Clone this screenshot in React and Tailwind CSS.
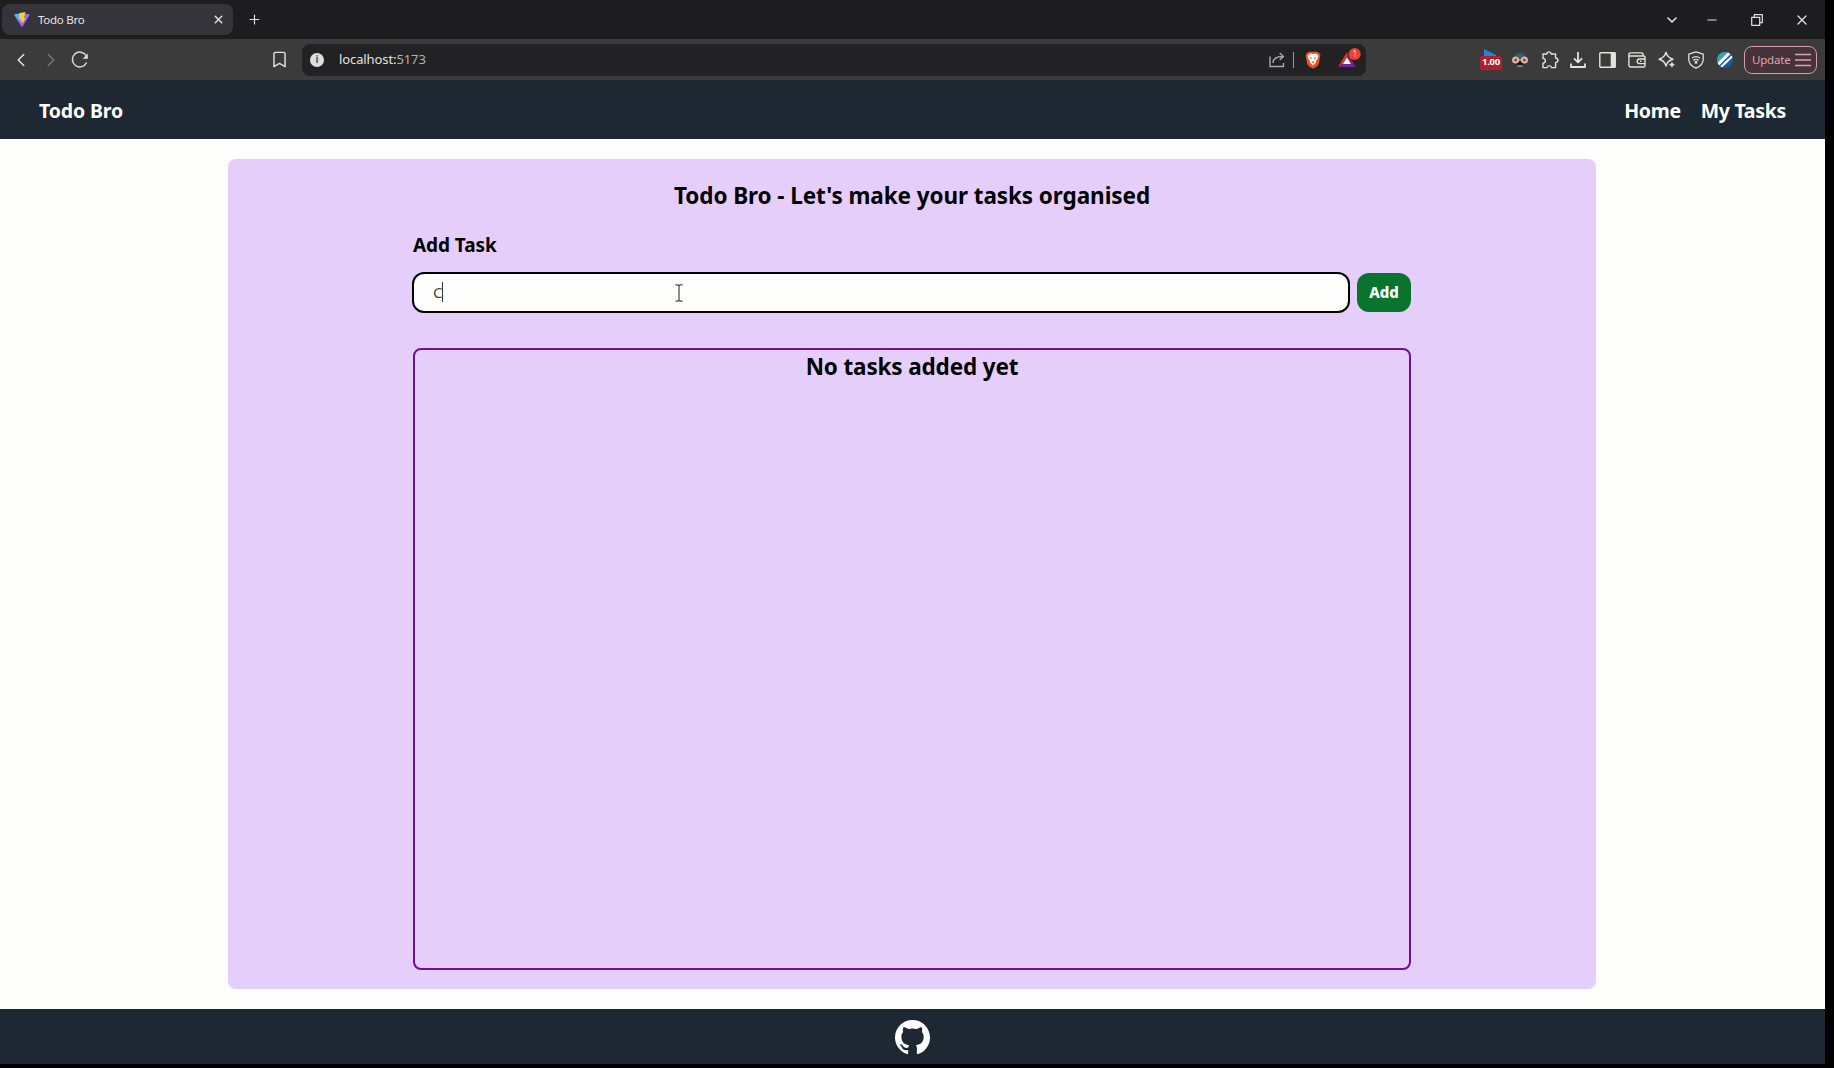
import { ChevronDown, Minus, X, Plus, ChevronLeft, ChevronRight, Bookmark } from "lucide-react";

const ViteLogo = () => (
  <svg width="16" height="16" viewBox="0 0 16 16">
    <defs>
      <linearGradient id="v" x1="0" y1="0" x2="0.8" y2="0.8">
        <stop offset="0" stopColor="#41d1ff" />
        <stop offset="1" stopColor="#bd34fe" />
      </linearGradient>
    </defs>
    <path d="M0 2.5 7.4 1.2 16 2.5 8 15.5z" fill="url(#v)" />
    <path d="M11.5 0 5.5 1 5 7.4 7 7 6.6 10 8.4 9.4 7.8 12.5 11.8 6 9.8 6.3z" fill="#ffcd2e" />
  </svg>
);

const Reload = () => (
  <svg width="18" height="18" viewBox="0 0 18 18" fill="none" stroke="#dededc" strokeWidth="1.5">
    <path d="M15.2 4.7A7.4 7.4 0 1 0 15.6 11.5" />
    <path d="M16.8 2.6v5.2h-5z" fill="#dededc" stroke="none" />
  </svg>
);

const Share = () => (
  <svg width="16" height="16" viewBox="0 0 16 16" fill="none" stroke="#a9a9a9" strokeWidth="1.4">
    <path d="M1 4.5V14.5H14.5V11" />
    <path d="M4 11C4 6.5 7 4.5 14 4.5M10.7 1 14.4 4.5 10.7 8" />
  </svg>
);

const Brave = () => (
  <svg width="16" height="18" viewBox="0 0 16 18">
    <path d="M4 .8 2 2 .6 3.5 1 6 2.2 13 4 15.2 8 17.8 12 15.2 13.8 13 15 6 15.4 3.5 14 2 12 .8z" fill="#f0501f" />
    <path d="M8 3 5 2.6 2.6 4.8 3 7 5 10 5 11.6 8 14.6 11 11.6 11 10 13 7 13.4 4.8 11 2.6z" fill="#fff" />
    <path d="M4.2 6.2 7 6.8 6.4 8.2zM11.8 6.2 9 6.8 9.6 8.2zM6.3 11 8 10.2 9.7 11 8 12.3z" fill="#f0501f" />
  </svg>
);

const Triangle = () => (
  <svg width="23" height="20" viewBox="0 0 23 20">
    <path d="M9 4 0 19 9 13z" fill="#e0352b" />
    <path d="M9 4 18 19 9 13z" fill="#8a1e66" />
    <path d="M0 19H18L9 13z" fill="#662d91" />
    <path d="M9 9.5 5 16H13z" fill="#fff" />
    <circle cx="16.7" cy="6" r="6" fill="#f0402c" />
    <text x="16.7" y="9" textAnchor="middle" fontSize="8" fontFamily="Noto Sans" fill="#ffd0c8">1</text>
  </svg>
);

const SpeedFlag = () => (
  <span className="flex h-[22px] w-[22px] flex-col">
    <svg width="22" height="7" viewBox="0 0 22 7"><path d="M4 0 16 6 16 7H4z" fill="#1e88d6" /></svg>
    <span className="flex h-[14px] items-center justify-center rounded-[2px] bg-[#b01f2a] text-[9.5px] font-bold tracking-[-0.2px] text-white">1.00</span>
  </span>
);

const Face = () => (
  <svg width="16" height="16" viewBox="0 0 16 16">
    <path d="M2.5 6Q3 1 8 1t5.5 5z" fill="#2b6568" />
    <path d="M5 10H11L12.5 12.5H3.5z" fill="#111" />
    <path d="M5.5 14.2h5" stroke="#8fa0a0" strokeWidth="1.3" />
    <circle cx="3.6" cy="8" r="2.5" fill="#5b5b5b" stroke="#eeb0a8" strokeWidth="2" />
    <circle cx="12.4" cy="8" r="2.5" fill="#5b5b5b" stroke="#eeb0a8" strokeWidth="2" />
    <path d="M6 7.6h4" stroke="#eeb0a8" strokeWidth="1.2" />
  </svg>
);

const line = { fill: "none", stroke: "#e2e2df", strokeWidth: 1.4, strokeLinejoin: "round" };

const Puzzle = () => (
  <svg width="18" height="18" viewBox="0 0 18 18" {...line}>
    <path d="M2 3H5.8C6 1.6 6.8.9 8 .9S10 1.6 10.3 3H14.6V7C16.2 7.3 17 8.2 17 9.3S16.2 11.3 14.6 11.6V16.6H10.4C10.2 15.2 9.4 14.6 8.3 14.6S6.4 15.2 6.1 16.6H2V12.2C3.6 12 4.4 11 4.4 9.8S3.6 7.6 2 7.4z" />
  </svg>
);
const Download = () => (
  <svg width="16" height="16" viewBox="0 0 16 16" {...line} strokeWidth="1.8">
    <path d="M8 0V10M4 6.3 8 10.3 12 6.3M1 11.5V15H15V11.5" />
  </svg>
);
const Panel = () => (
  <svg width="17" height="16" viewBox="0 0 17 16" {...line}>
    <rect x=".8" y=".8" width="15.4" height="14.4" rx="1" />
    <path d="M12.4 1H16V15H12.4z" fill="#e2e2df" />
  </svg>
);
const Wallet = () => (
  <svg width="18" height="16" viewBox="0 0 18 16" {...line}>
    <path d="M15 4V2.2Q15 .9 13.6.9H2.6Q.9.9.9 2.6T2.6 4H15.4Q17 4 17 5.6V13.4Q17 15 15.4 15H2.8Q.9 15 .9 13.2V2.6" />
    <path d="M17 7H11.6Q9.2 7 9.2 9.3T11.6 11.6H17M12 9.3h1.4" />
  </svg>
);
const Sparkle = () => (
  <svg width="18" height="18" viewBox="0 0 18 18" {...line}>
    <path d="M8 1.2Q9.3 6.8 15 8.2 9.3 9.6 8 15 6.6 9.6 1.1 8.2 6.6 6.8 8 1.2z" />
    <path d="M14 9.8Q14.5 13 17.6 13.8 14.5 14.5 14 17.6 13.4 14.5 10.4 13.8 13.4 13 14 9.8z" fill="#e2e2df" stroke="#3c3b3b" strokeWidth=".6" />
  </svg>
);
const Shield = () => (
  <svg width="16" height="18" viewBox="0 0 16 18" {...line} strokeWidth="1.3">
    <path d="M8 .9 15.2 3.2V8.5Q15.2 14 8 17.2.8 14 .8 8.5V3.2z" />
    <path d="M4 7.2Q8 4.2 12 7.2M5.4 9.4Q8 7.4 10.6 9.4" />
    <circle cx="8" cy="11.4" r=".8" fill="#e2e2df" />
  </svg>
);
const Profile = () => (
  <svg width="16" height="16" viewBox="0 0 16 16">
    <clipPath id="pc"><circle cx="8" cy="8" r="8" /></clipPath>
    <g clipPath="url(#pc)">
      <path d="M0 0H16V16H0z" fill="#1d58a8" />
      <path d="M0 0H14L0 13z" fill="#3fa3a5" />
      <path d="M1 12.5 12.5 1" stroke="#fff" strokeWidth="3" />
      <path d="M4 15 15.5 4" stroke="#fff" strokeWidth="2.2" />
    </g>
  </svg>
);

const GitHub = () => (
  <svg width="35" height="35" viewBox="0 0 16 16" fill="#fff">
    <path d="M8 0C3.58 0 0 3.58 0 8c0 3.54 2.29 6.53 5.47 7.59.4.07.55-.17.55-.38 0-.19-.01-.82-.01-1.49-2.01.37-2.53-.49-2.69-.94-.09-.23-.48-.94-.82-1.13-.28-.15-.68-.52-.01-.53.63-.01 1.08.58 1.23.82.72 1.21 1.87.87 2.33.66.07-.52.28-.87.51-1.07-1.78-.2-3.64-.89-3.64-3.95 0-.87.31-1.59.82-2.15-.08-.2-.36-1.02.08-2.12 0 0 .67-.21 2.2.82.64-.18 1.32-.27 2-.27s1.36.09 2 .27c1.53-1.04 2.2-.82 2.2-.82.44 1.1.16 1.92.08 2.12.51.56.82 1.27.82 2.15 0 3.07-1.87 3.75-3.65 3.95.29.25.54.73.54 1.48 0 1.07-.01 1.93-.01 2.2 0 .21.15.46.55.38A8.01 8.01 0 0 0 16 8c0-4.42-3.58-8-8-8z" />
  </svg>
);

function TabStrip() {
  return (
    <div className="flex h-[39px] items-center bg-[#1d1d20] text-[#e4e4e4]">
      <div className="ml-[2px] flex h-[31px] w-[231px] items-center rounded-lg bg-[#34343a] pl-[12px] pr-[8px]">
        <ViteLogo />
        <span className="ml-[8px] flex-1 text-[11.5px] tracking-[-0.25px]">Todo Bro</span>
        <X size={13} strokeWidth={2.6} />
      </div>
      <Plus size={15} strokeWidth={1.8} className="ml-[14px]" />
      <div className="flex-1" />
      <ChevronDown size={16} strokeWidth={2.4} className="mr-[25px]" />
      <Minus size={14} strokeWidth={2} className="mr-[32px]" />
      <svg width="12" height="12" viewBox="0 0 12 12" {...line} strokeWidth="1.2" className="mr-[31px]">
        <path d="M.7 3.3H8.7V11.3H.7zM3.3 3.3V.7H11.3V8.7H8.7" />
      </svg>
      <X size={16} strokeWidth={1.9} className="mr-[15px]" />
    </div>
  );
}

function Toolbar() {
  return (
    <div className="flex h-[41px] items-center bg-[#3c3b3b] text-[#e2e2df]">
      <ChevronLeft size={22} strokeWidth={1.7} className="ml-[10px]" />
      <ChevronRight size={22} strokeWidth={1.7} className="ml-[8px] text-[#77776f]" />
      <span className="ml-[9px]"><Reload /></span>
      <Bookmark size={19} strokeWidth={1.8} className="ml-[181px]" />
      <div className="ml-[13px] flex h-8 w-[1064px] items-center rounded-lg bg-[#222124] pl-[8px] pr-[5px]">
        <span className="flex size-[14px] items-center justify-center rounded-full bg-[#dedede] text-[10px] font-bold text-[#555]">i</span>
        <span className="ml-[15px] flex-1 text-[13px] tracking-[-0.1px]">localhost:<span className="text-[#b4b4b4]">5173</span></span>
        <Share />
        <span className="ml-[8px] h-4 w-px bg-[#999]" />
        <span className="ml-[11px]"><Brave /></span>
        <span className="ml-[17px] -mt-[3px]"><Triangle /></span>
      </div>
      <div className="ml-[114px] flex items-center">
        <SpeedFlag />
        <span className="ml-[10px]"><Face /></span>
        <span className="ml-[13px]"><Puzzle /></span>
        <span className="ml-[11px]"><Download /></span>
        <span className="ml-[13px]"><Panel /></span>
        <span className="ml-[12px]"><Wallet /></span>
        <span className="ml-[12px]"><Sparkle /></span>
        <span className="ml-[12px]"><Shield /></span>
        <span className="ml-[13px]"><Profile /></span>
        <div className="ml-[11px] flex h-[28px] w-[73px] items-center justify-between rounded-lg border border-[#d99aae] bg-[#44343a] pl-[7px] pr-[5px] text-[11.5px] tracking-[-0.2px] text-[#e0a0b4]">
          Update
          <svg width="16" height="14" viewBox="0 0 16 14" stroke="#e0a0b4" strokeWidth="1.3"><path d="M0 1.5H16M0 7H16M0 12.5H16" /></svg>
        </div>
      </div>
    </div>
  );
}

export default function App() {
  return (
    <div className="h-[1068px] w-[1834px] overflow-hidden bg-black font-['Noto_Sans',sans-serif]">
      <div className="flex h-[1064px] w-[1825px] flex-col bg-[#fdfdfb]">
        <TabStrip />
        <Toolbar />
        <nav className="flex h-[59px] items-center justify-between bg-[#1d2833] pt-[2px] pl-[39px] pr-[39px] text-[19.5px] font-bold text-white">
          <span className="tracking-[-0.15px]">Todo Bro</span>
          <div className="flex gap-5 tracking-[-0.3px]">
            <span>Home</span>
            <span>My Tasks</span>
          </div>
        </nav>
        <main className="mt-5 ml-[228px] flex h-[830px] w-[1368px] flex-col rounded-lg bg-[#e5cffa] px-[185px] text-black">
          <h1 className="mt-[21px] text-center text-[22.5px] leading-8 font-bold tracking-[-0.08px]">Todo Bro - Let's make your tasks organised</h1>
          <h2 className="mt-[19px] text-[19px] leading-7 font-bold tracking-[-0.08px]">Add Task</h2>
          <div className="mt-[13px] flex h-[40px] items-center">
            <div className="-ml-px flex h-[41px] w-[938px] shrink-0 items-center rounded-xl border-2 border-black bg-[#fdfdfb] pl-[19px] text-[#444]">
              <span className="text-[15px]">C</span>
              <span className="h-5 w-px bg-[#333]" />
              <svg width="8" height="18" viewBox="0 0 8 18" fill="none" stroke="#444" strokeWidth="1.2" className="mt-[2px] ml-[232px]">
                <path d="M.5.8H3L4 1.8 5 .8H7.5M4 1.8V16.2M.5 17.2H3L4 16.2 5 17.2H7.5" />
              </svg>
            </div>
            <button className="ml-[7px] h-[39px] w-[54px] shrink-0 rounded-xl bg-[#08742e] text-[15px] font-extrabold text-white">Add</button>
          </div>
          <section className="mt-[36px] h-[622px] rounded-lg border-2 border-[#6f0f9c] pt-px text-center text-[22.5px] leading-8 font-bold tracking-[-0.15px]">
            No tasks added yet
          </section>
        </main>
        <footer className="mt-[20px] flex h-[55px] items-center justify-center bg-[#1d2833] pt-px">
          <GitHub />
        </footer>
      </div>
    </div>
  );
}
